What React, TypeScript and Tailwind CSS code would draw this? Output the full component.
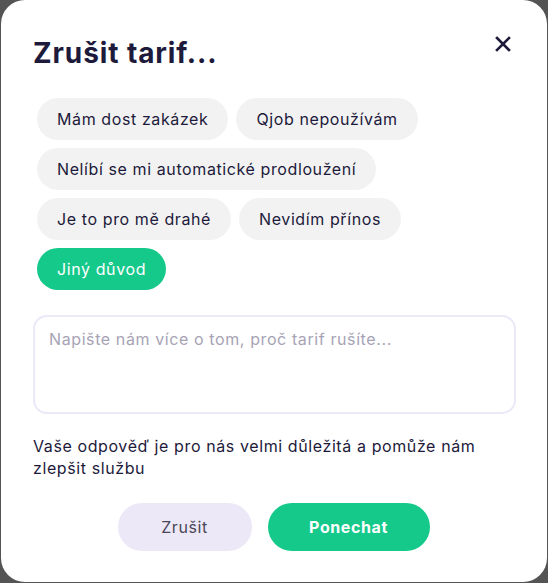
import React from "react";

const chips = [
  ["Mám dost zakázek", "Qjob nepoužívám"],
  ["Nelíbí se mi automatické prodloužení"],
  ["Je to pro mě drahé", "Nevidím přínos"],
];

export default function App() {
  return (
    <div
      className="w-[548px] h-[583px] bg-[#545454] overflow-hidden"
      style={{ fontFamily: "Inter, 'Noto Sans', sans-serif" }}
    >
      <div className="ml-[1px] w-[546px] h-[582px] bg-white rounded-[24px] relative flex flex-col px-[32px] pt-[35px] tracking-[0.6px]">
        <button className="absolute right-[36px] top-[36px] w-[16px] h-[16px] flex items-center justify-center text-[#1d1a3b]">
          <svg width="16" height="16" viewBox="0 0 16 16" fill="none">
            <path d="M2 2L14 14M14 2L2 14" stroke="currentColor" strokeWidth="2.6" strokeLinecap="square" />
          </svg>
        </button>
        <h1 className="text-[28px] leading-[36px] font-bold text-[#1d1a3b] tracking-[0.9px]">
          Zrušit tarif...
        </h1>
        <div className="mt-[27px] ml-[4px] flex flex-col gap-[8px]">
          {chips.map((row, i) => (
            <div key={i} className="flex gap-[8px]">
              {row.map((c) => (
                <div
                  key={c}
                  className="h-[42px] px-[20px] rounded-full bg-[#f2f2f2] text-[#1d1a3b] text-[16px] flex items-center"
                >
                  {c}
                </div>
              ))}
            </div>
          ))}
          <div className="flex">
            <div className="h-[42px] px-[20px] rounded-full bg-[#15c98b] text-white text-[16px] flex items-center">
              Jiný důvod
            </div>
          </div>
        </div>
        <textarea
          className="mt-[25px] h-[99px] w-[483px] border-2 border-[#ebe8f8] rounded-[14px] px-[14px] py-[10px] text-[16px] leading-[24px] tracking-[0.6px] text-[#1d1a3b] placeholder:text-[#a7a3b5] resize-none outline-none"
          placeholder="Napište nám více o tom, proč tarif rušíte..."
        />
        <p className="mt-[21px] max-w-[470px] text-[16px] leading-[22px] text-[#1d1a3b]">
          Vaše odpověď je pro nás velmi důležitá a pomůže nám zlepšit službu
        </p>
        <div className="mt-[24px] flex justify-center gap-[16px] pr-[1px]">
          <button className="h-[48px] w-[134px] rounded-full bg-[#ece8f7] text-[#4a4656] text-[16px] tracking-[0.6px]">
            Zrušit
          </button>
          <button className="h-[48px] w-[162px] rounded-full bg-[#15c98b] text-white text-[16px] font-bold tracking-[0.6px]">
            Ponechat
          </button>
        </div>
      </div>
    </div>
  );
}
